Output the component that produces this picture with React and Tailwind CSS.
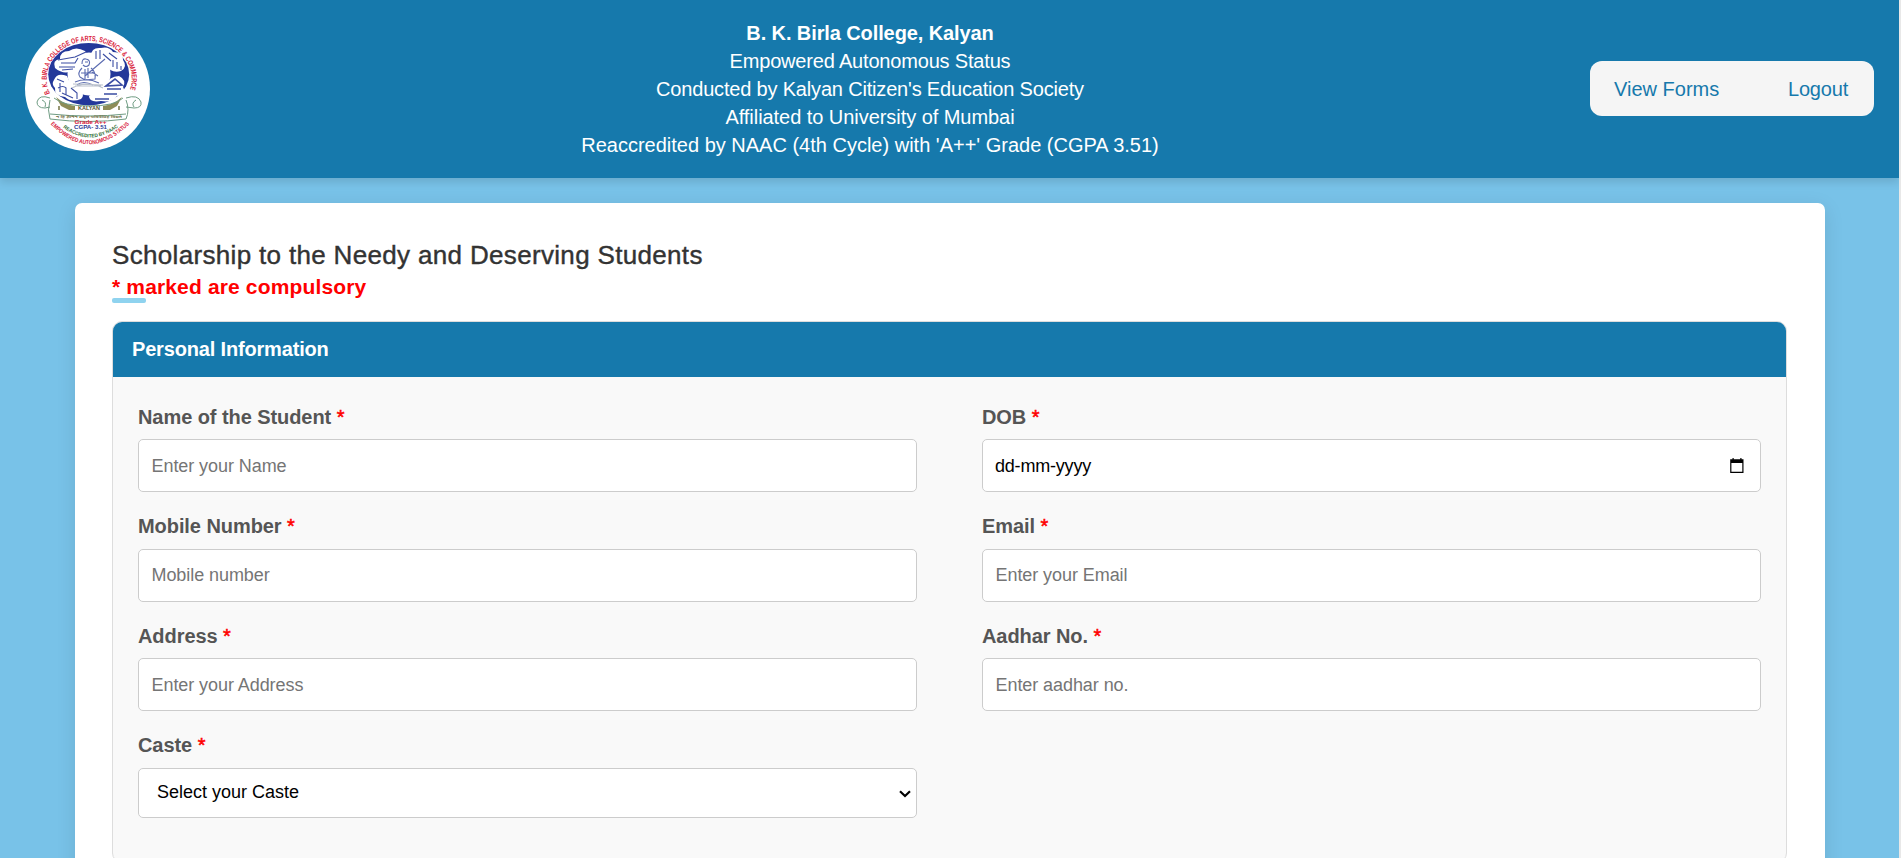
import React from "react";

function Logo() {
  return (
    <svg viewBox="0 0 125 125" className="h-[125px] w-[125px] shrink-0" fontFamily="Liberation Sans, sans-serif" fontWeight="bold">
      <defs>
        <path id="arcTop" d="M25 67.5 A42.5 38 0 1 1 103.5 67.5" />
        <path id="arcLow1" d="M38 101.5 Q65 122 94 100.5" />
        <path id="arcLow2" d="M25.5 98 Q64 139 105.5 97" />
      </defs>
      <circle cx="62.5" cy="62.5" r="62.5" fill="#fff" />
      <ellipse cx="63.7" cy="48.2" rx="40.5" ry="31.2" fill="#23389a" />
      <g fill="#fff">
        <path d="M30 42 Q27 34 35 33 Q35 25 44 25 Q51 20 60 25 Q64 29 58 33 Q54 36 48 45 Q38 49 30 42Z" />
        <path d="M66 30 Q66 21 76 22 Q84 20 88 26 Q98 26 98 34 Q103 41 96 45 Q86 48 80 38 Q75 34 66 30Z" />
        <path d="M29 54 Q32 46 42 50 Q46 62 56 64 Q60 70 56 73 Q46 77 40 71 Q29 70 30 62 Q26 58 29 54Z" />
        <path d="M80 60 Q84 50 94 50 Q102 54 98 61 Q102 68 92 70 Q88 77 76 75 Q64 77 64 70 Q72 64 80 60Z" />
        <circle cx="64" cy="48" r="21.5" />
      </g>
      <g fill="none" stroke="#3b4da3" strokeWidth="1.1">
        <path d="M33 34 L50 31 L61 26 M36 37 L50 37 L53 32 M34 41 H50 M37 44 L48 43" />
        <path d="M71 25 V33 M75 24 V33 M78 28 L86 35 M84 27 L92 33 M88 34 V41 M92 36 V43 M96 40 V44" />
        <path d="M32 53 L39 56 M33 62 Q38 59 41 62 V69 M46 62 L52 67 V73 M37 67 L48 72 M35 57 V66" />
        <path d="M81 60 L90 53 L97 59 Z M82 63 H96 M79 68 H92 M70 73 H84" strokeWidth="1.6" />
      </g>
      <g fill="none" stroke="#5a6bb0" strokeWidth="1.1">
        <path d="M57 38 Q57 32 61 33 Q66 34 64 39 Q61 42 58 39 M60 36 H63" />
        <path d="M57 42 Q52 47 55 51 L60 54 L70 53 Q71 46 66 42 M60 43 V53 M63 42 V52 M56 47 H68 M50 56 Q62 51 74 57 M60 50 L80 33 M52 59 Q58 54 68 59 M67 46 L73 50" />
        <path d="M47 62 Q62 54 78 62 M50 60 H76 M48 58 L78 59" stroke="#b9c0cc" />
      </g>
      <path d="M31 71 Q40 79 50 80 V84 H44 L36 80 Z M97 71 Q88 79 78 80 V84 H85 L92 80 Z" fill="#8d8c57" />
      <g fill="none" stroke="#6f9c83" strokeWidth="1">
        <path d="M29 72 Q38 80 64 80 Q90 80 98 72 M25 74 Q22 84 25 93 Q64 98 101 93 Q105 84 101 74 M25 88 Q64 92 101 88 M25 72 Q14 68 12 76 Q12 82 20 82 L25 81 M17 74 Q22 76 20 81 M101 72 Q113 68 116 76 Q117 82 109 82 L101 81 M111 74 Q106 77 109 81" />
        <path d="M34 80 V84 M94 80 V84" stroke="#6d6d3b" strokeWidth="1.4" />
      </g>
      <text x="64" y="84.3" fontSize="4.8" textAnchor="middle" fill="#55522c" textLength="22" lengthAdjust="spacingAndGlyphs">KALYAN</text>
      <text x="64" y="92.3" fontSize="3.8" textAnchor="middle" fill="#76774f" textLength="66" lengthAdjust="spacingAndGlyphs" fontFamily="Noto Sans, sans-serif">न हि ज्ञानेन सदृशं पवित्रमिह विद्यते</text>
      <text x="65.5" y="98.1" fontSize="4.6" textAnchor="middle" fill="#d8213b" textLength="32" lengthAdjust="spacingAndGlyphs">Grade A++</text>
      <text x="65.5" y="103.2" fontSize="4.6" textAnchor="middle" fill="#2c3c98" textLength="33" lengthAdjust="spacingAndGlyphs">CGPA- 3.51</text>
      <text fontSize="7.4" fill="#d8213b"><textPath href="#arcTop" textLength="152" lengthAdjust="spacingAndGlyphs">B. K. BIRLA COLLEGE OF ARTS, SCIENCE &amp; COMMERCE</textPath></text>
      <text fontSize="5" fill="#2e6d35"><textPath href="#arcLow1" textLength="60" lengthAdjust="spacingAndGlyphs">REACCREDITED BY NAAC</textPath></text>
      <text fontSize="5.8" fill="#d8213b"><textPath href="#arcLow2" textLength="91" lengthAdjust="spacingAndGlyphs">EMPOWERED AUTONOMOUS STATUS</textPath></text>
    </svg>
  );
}

function Field({ label, children }) {
  return (
    <div className="flex h-[109.6px] flex-col">
      <label className="mb-[7.5px] pt-[0.5px] text-[20px] leading-[30px] font-bold tracking-[-0.07px] text-[#555]">
        {label} <span className="font-normal text-[#ff0000] [-webkit-text-stroke:0.5px_#ff0000]">*</span>
      </label>
      {children}
    </div>
  );
}

function TextField({ label, placeholder }) {
  return (
    <Field label={label}>
      <input
        placeholder={placeholder}
        className="h-[53px] w-full rounded-[5px] border border-[#ccc] bg-white px-[12.5px] pt-px text-[18px] tracking-[-0.07px] placeholder:text-[#757575]"
      />
    </Field>
  );
}

export default function App() {
  return (
    <div className="h-[858px] overflow-hidden border-r-2 border-[#e8e8e8] bg-[#78c2e8] font-['Liberation_Sans',Arial,sans-serif]">
      <header className="flex h-[178px] items-center justify-between bg-[#1679ac] pr-[25px] pb-px pl-[25px] shadow-[0_4px_8px_rgba(0,0,0,0.12)]">
        <Logo />
        <div className="mt-px text-center text-[20px] leading-[28px] text-white">
          <p className="font-bold tracking-[-0.1px]">B. K. Birla College, Kalyan</p>
          <p className="tracking-[-0.18px]">Empowered Autonomous Status</p>
          <p className="tracking-[-0.18px]">Conducted by Kalyan Citizen's Education Society</p>
          <p className="tracking-[-0.05px]">Affiliated to University of Mumbai</p>
          <p>Reaccredited by NAAC (4th Cycle) with 'A++' Grade (CGPA 3.51)</p>
        </div>
        <nav className="flex h-[55px] w-[284px] items-center justify-between rounded-[12px] bg-[#f5f5f5] pr-[26px] pl-[24px] text-[20px] text-[#1679ac]">
          <a>View Forms</a>
          <a className="tracking-[-0.2px]">Logout</a>
        </nav>
      </header>

      <main className="mt-[25px] mr-[74px] ml-[75px] h-[900px] rounded-[7px] bg-white pt-[35px] pr-[38px] pl-[37px] shadow-[0_5px_20px_rgba(0,0,0,0.1)]">
        <div className="relative h-[83px]">
          <h1 className="text-[26px] leading-[34px] font-medium tracking-[0.33px] text-[#333] [-webkit-text-stroke:0.4px_#333]">
            Scholarship to the Needy and Deserving Students
          </h1>
          <p className="text-[21px] leading-[30px] font-bold tracking-[0.15px] text-[#ff0000]">* marked are compulsory</p>
          <span className="absolute top-[60px] left-0 h-[5px] w-[34px] rounded-[2px] bg-[#8fd3ef]" />
        </div>

        <section className="h-[542px] overflow-hidden rounded-[10px] border border-[#ddd] bg-[#f9f9f9]">
          <h2 className="flex h-[55px] items-center bg-[#1679ac] pb-[2px] pl-[19px] text-[20px] font-bold tracking-[-0.17px] text-white">
            Personal Information
          </h2>
          <div className="grid grid-cols-2 gap-x-[65px] px-[25px] pt-[24px]">
            <TextField label="Name of the Student" placeholder="Enter your Name" />
            <Field label="DOB">
              <div className="flex h-[53px] items-center justify-between rounded-[5px] border border-[#ccc] bg-white pr-[15px] pl-[12px] text-[18px] text-black">
                <span className="pt-px tracking-[-0.2px]">dd-mm-yyyy</span>
                <svg viewBox="0 0 16 16" className="h-4 w-4">
                  <path d="M3.5 0H4.7V1.2H11.3V0H12.5V1.2H14.5V15H1.2V1.2H3.5Z M2.4 5V13.8H13.3V5Z" fillRule="evenodd" />
                </svg>
              </div>
            </Field>
            <TextField label="Mobile Number" placeholder="Mobile number" />
            <TextField label="Email" placeholder="Enter your Email" />
            <TextField label="Address" placeholder="Enter your Address" />
            <TextField label="Aadhar No." placeholder="Enter aadhar no." />
            <Field label="Caste">
              <div className="grid h-[50px] items-center">
                <select className="col-start-1 row-start-1 h-[50px] w-full appearance-none rounded-[5px] border border-[#ccc] bg-white pr-[30px] pl-[18px] text-[18px] text-black">
                  <option>Select your Caste</option>
                </select>
                <svg viewBox="0 0 12 8" className="pointer-events-none col-start-1 row-start-1 mt-[2px] mr-[6px] h-2 w-3 justify-self-end" fill="none" stroke="#000" strokeWidth="2.2">
                  <path d="M1 1.2 L6 6 L11 1.2" />
                </svg>
              </div>
            </Field>
          </div>
        </section>
      </main>
    </div>
  );
}
